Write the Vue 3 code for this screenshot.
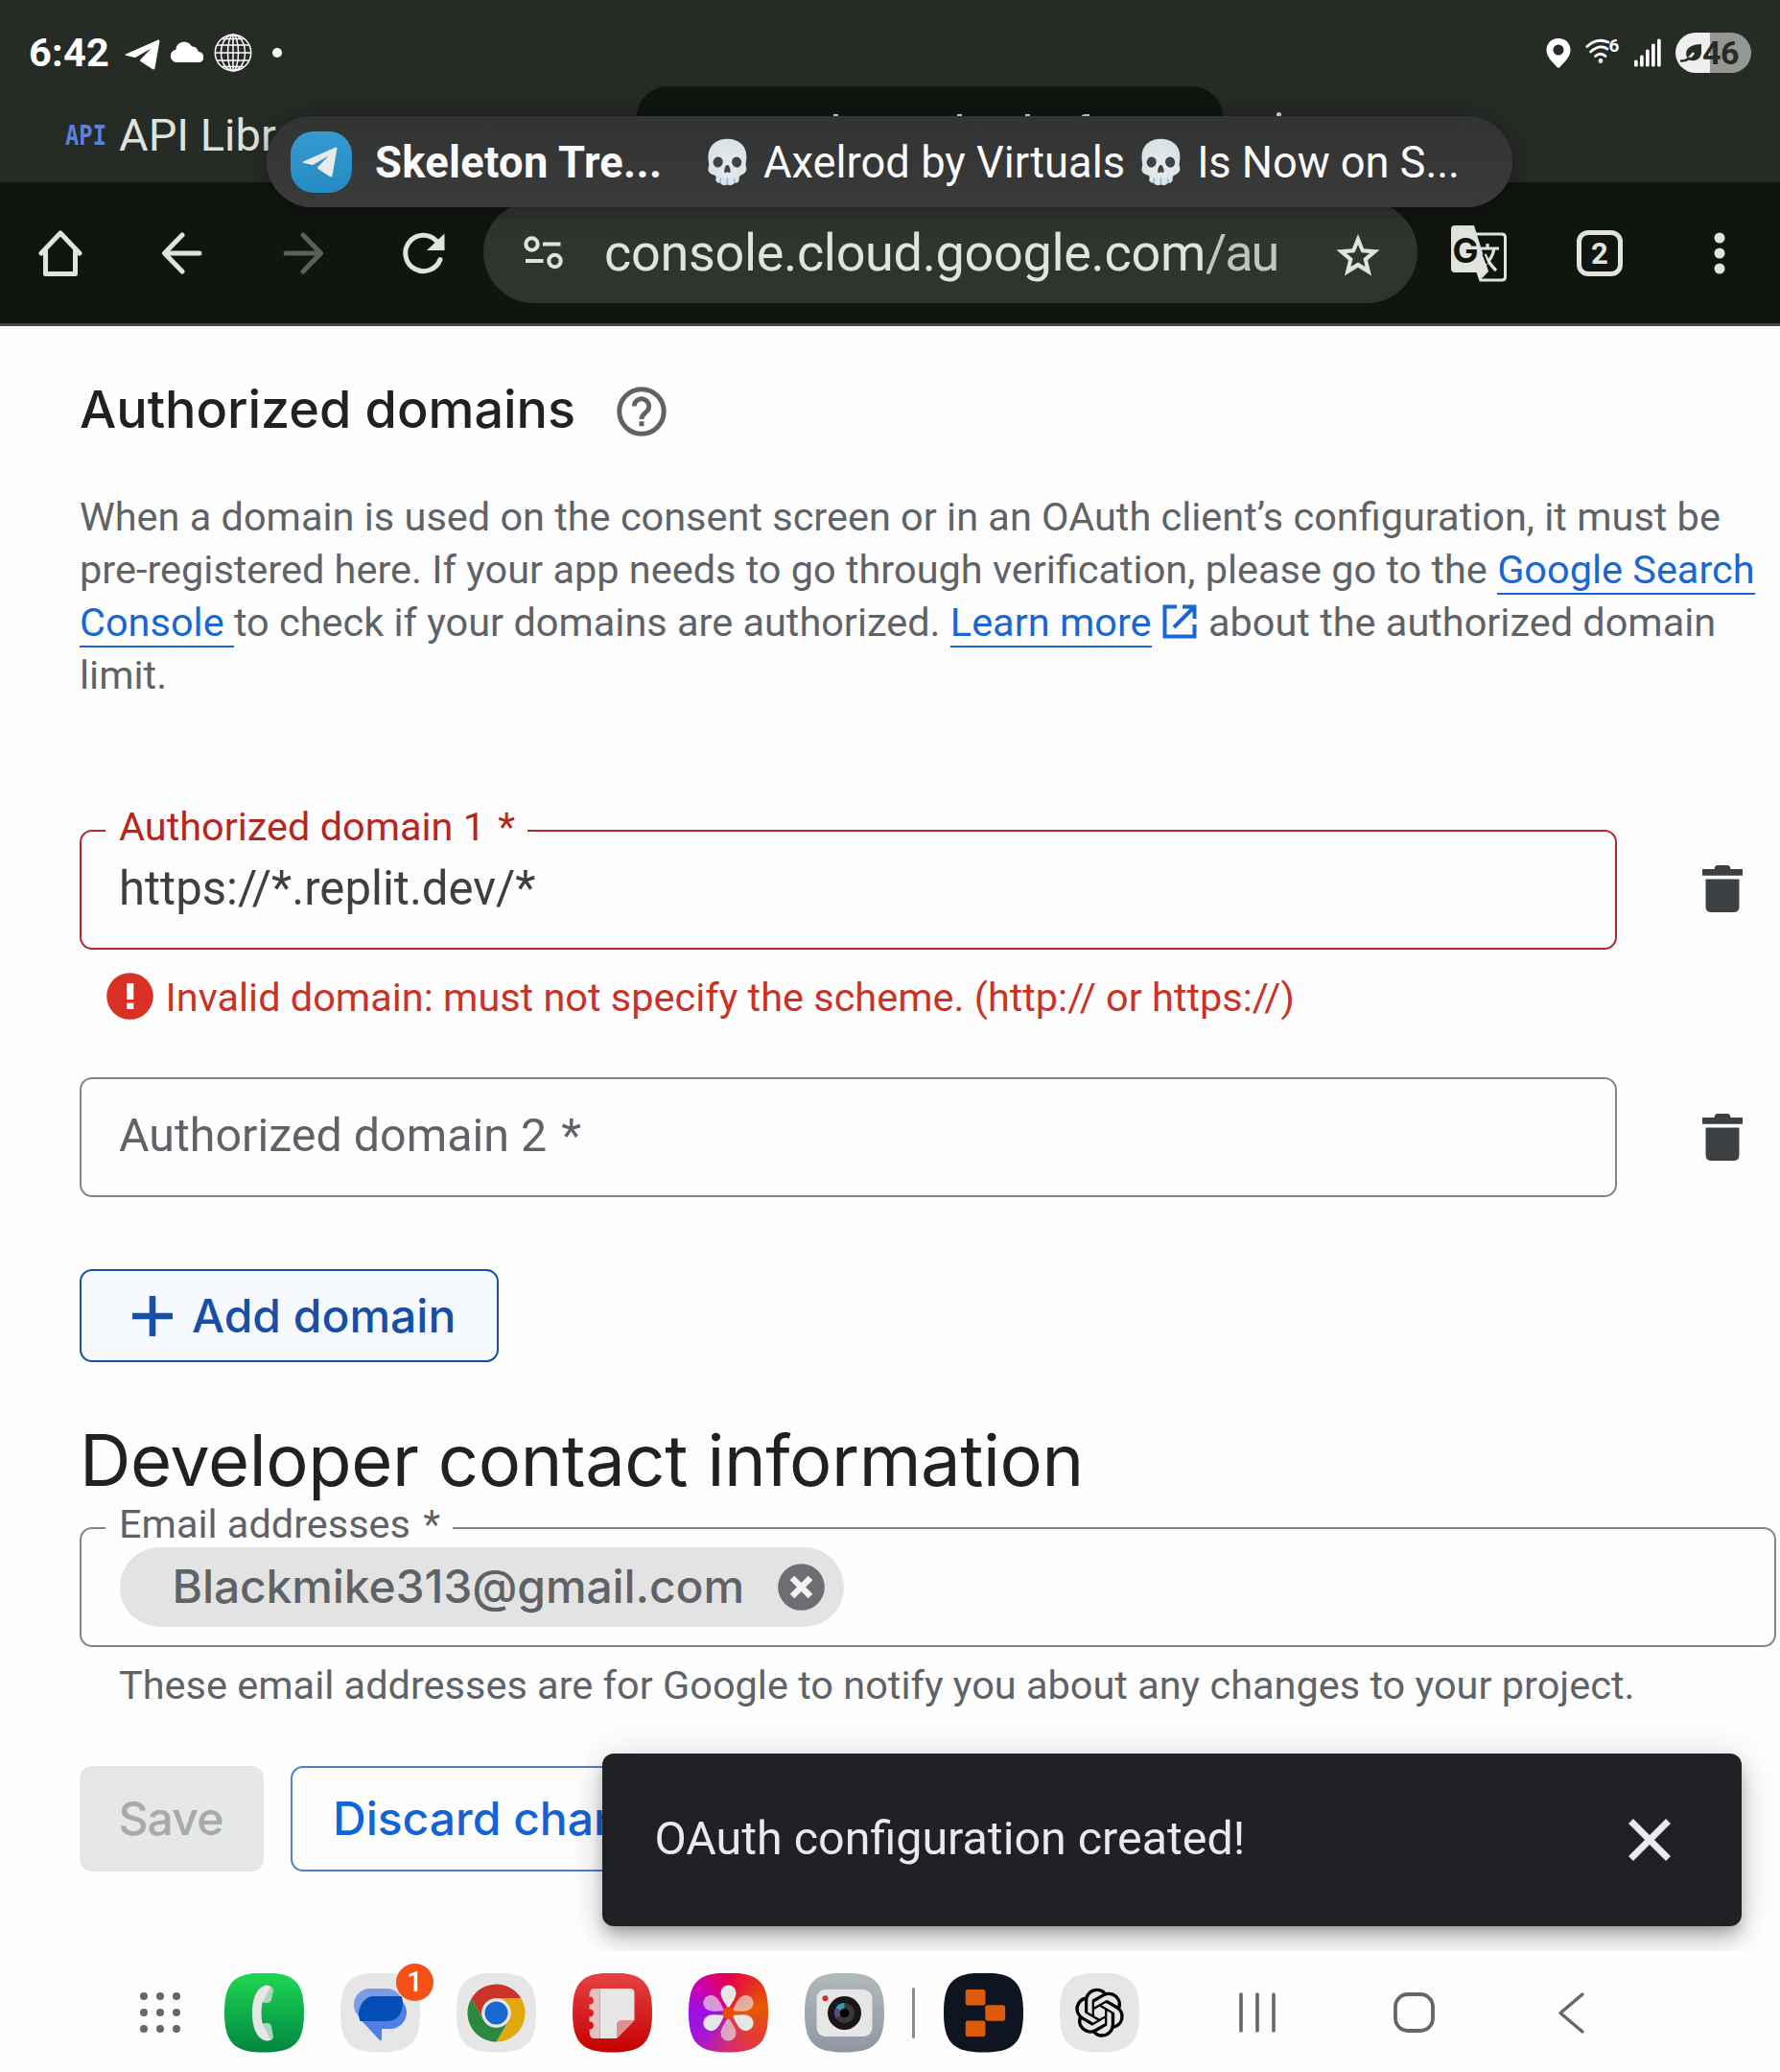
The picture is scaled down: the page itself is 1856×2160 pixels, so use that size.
<script setup>
const petals = [0, 60, 120, 180, 240, 300]
const signalBars = [7, 12, 18, 24, 29]
const gridDots = [0, 1, 2, 3, 4, 5, 6, 7, 8]
</script>

<template>
  <div class="screen">
    <header class="chrome">
      <div class="status">
        <span class="time">6:42</span>
        <svg class="s-plane" width="37" height="32" viewBox="0 0 37 32"><path d="M1 15.500 35 .5q1.600-.5 1.400 1.400L31.500 30q-.6 2.200-2.600.9L16.500 23q-1-.9 0-2L27.500 9.500 12 18.500q-1.200.6-2.400.3L1 16.800q-1.400-.6 0-1.300z" fill="#fff" /></svg>
        <svg class="s-cloud" width="37" height="21" viewBox="0 0 37 21"><path d="M7 21a6.700 6.700 0 0 1-.6-13.300A8.800 8.800 0 0 1 23 4.500a7 7 0 0 1 6.800 5.300A5.700 5.700 0 0 1 31 21z" fill="#fff" /></svg>
        <svg class="s-globe" width="40" height="40" viewBox="0 0 40 40" fill="none" stroke="#fff" stroke-width="1.500"><circle cx="20" cy="20" r="18.700" /><ellipse cx="20" cy="20" rx="12.500" ry="18.700" /><ellipse cx="20" cy="20" rx="5.500" ry="18.700" /><path d="M20 1v38M1 20h38M3.500 12h33M3.500 28h33M9 5.500h22M9 34.500h22" /></svg>
        <span class="s-dot"></span>
        <span class="grow"></span>
        <svg class="s-pin" width="26" height="31" viewBox="0 0 26 31"><path fill-rule="evenodd" d="M13 0C5.500 0 .5 5.500.5 12.200.5 20 8 25.500 11.500 30q1.500 1.500 3 0C18 25.500 25.500 20 25.500 12.200 25.500 5.500 20.500 0 13 0zm0 6.500a5.500 5.500 0 1 1 0 11 5.500 5.500 0 0 1 0-11z" fill="#fff" /></svg>
        <svg class="s-wifi" width="36" height="26" viewBox="0 0 36 26" fill="none" stroke="#fff" stroke-width="2.800" stroke-linecap="round"><path d="M1.800 8.500Q12 -1 24 4M5.500 14q9.500-8.500 17.500-3M10.500 18.500q5.500-4.500 10.500 0" /><circle cx="16" cy="23.500" r="1" /><text x="24.500" y="14" font-family="Roboto, sans-serif" font-weight="700" font-size="19" fill="#fff" stroke="none">6</text></svg>
        <svg class="s-signal" width="29" height="30" viewBox="0 0 29 30"><rect v-for="(h, i) in signalBars" :key="h" :x="i * 6" :y="29.500 - h" width="3.700" :height="h" rx="1.600" fill="#fff" /></svg>
        <div class="battery">
          <svg width="23" height="21" viewBox="0 0 23 21"><path d="M22 1v8c0 7-6 11-13 8.500C4 13 4 1 22 1z" fill="#272b26" /><path d="M1 18.500q8-1 13-8.500" fill="none" stroke="#eee" stroke-width="2.600" /><path d="M1 18.500q5 0 8.500-3" fill="none" stroke="#272b26" stroke-width="2.400" stroke-linecap="round" /></svg>
          <span>46</span>
        </div>
      </div>

      <div class="tabs">
        <svg class="api" width="44" height="26" viewBox="0 0 44 26"><text x="0" y="23" font-family="'DejaVu Sans Mono', monospace" font-weight="700" font-size="29" textLength="43" lengthAdjust="spacingAndGlyphs" fill="#5c82dc">API</text></svg>
        <span class="tab-title">API Libr</span>
        <div class="tab-active">
          <svg width="611" height="32" viewBox="0 0 611 32" fill="#d6d9d2"><path d="M205 29h5v3h-5zM334 29h5v3h-5zM405 29h5v3h-5zM463 32q1-3 5-3h4v3z" /></svg>
        </div>
        <span class="tab-dot"></span>
      </div>

      <div class="toolbar">
        <svg class="t-home" width="48" height="50" viewBox="0 0 48 50" fill="none" stroke="#e1e4dd" stroke-width="5" stroke-linejoin="round" stroke-linecap="round"><path d="M4 25 24 4 44 25M8.500 21v25.500h31V21" /></svg>
        <svg class="t-back" width="43" height="44" viewBox="0 0 43 44" fill="none" stroke="#e1e4dd" stroke-width="5" stroke-linejoin="round" stroke-linecap="round"><path d="M40 22H4M22 3 3.500 22 22 41" /></svg>
        <svg class="t-fwd" width="43" height="44" viewBox="0 0 43 44" fill="none" stroke="#5c605a" stroke-width="5" stroke-linejoin="round" stroke-linecap="round"><path d="M3 22h36M21 3l18.500 19L21 41" /></svg>
        <svg class="t-reload" width="44" height="44" viewBox="0 0 44 44"><path d="M39 28.500A18.700 18.700 0 1 1 35 9" fill="none" stroke="#e1e4dd" stroke-width="5" stroke-linecap="round" /><path d="M43.500 1.500V19H25z" fill="#e1e4dd" /></svg>
        <div class="omnibox">
          <svg class="o-tune" width="41" height="34" viewBox="0 0 41 34" fill="none" stroke="#e1e4dd" stroke-width="4"><circle cx="8.500" cy="8.500" r="6.200" /><path d="M20 8.500h18.500M2 26h18.500" /><circle cx="32.500" cy="26" r="6.200" /></svg>
          <span class="url">console.cloud.google.com<i>/au</i></span>
          <svg class="o-star" width="46" height="44" viewBox="0 0 46 44"><path fill-rule="evenodd" d="M23 0l6.100 15.200L45.500 16.600 33 27.300 37 43.500 23 34.800 9 43.500l4-16.200L.5 16.600l16.400-1.400zm0 11-3.400 8.200-8.700.7 6.700 5.700-2.100 8.500 7.500-4.600 7.500 4.600-2.100-8.500 6.700-5.700-8.700-.7z" fill="#e1e4dd" /></svg>
        </div>
        <svg class="t-trans" width="60" height="60" viewBox="0 0 60 60">
          <path d="M26 10h28q3.500 0 3.500 3.500v41q0 3.500-3.500 3.500H31" fill="none" stroke="#e1e4dd" stroke-width="3" />
          <path d="M5 1h20l15 48-9.500 10-3-9H5q-4 0-4-4V5q0-4 4-4z" fill="#e1e4dd" />
          <text x="2.500" y="40" font-family="Inter, sans-serif" font-weight="700" font-size="36" fill="#111510">G</text>
          <path d="M32 25h19M39 20v5M46 25q-2 11-10 17M36 31q4 9 12 17" fill="none" stroke="#e1e4dd" stroke-width="3.200" />
          <path d="M34.500 31l4 10" fill="none" stroke="#111510" stroke-width="2.200" />
        </svg>
        <div class="tabcount">2</div>
        <svg class="t-more" width="12" height="44" viewBox="0 0 12 44" fill="#e1e4dd"><circle cx="6" cy="6" r="5.500" /><circle cx="6" cy="22" r="5.500" /><circle cx="6" cy="38" r="5.500" /></svg>
      </div>

      <div class="notice">
        <div class="tg"><svg width="37" height="32" viewBox="0 0 37 32"><path d="M1 15.500 35 .5q1.600-.5 1.400 1.400L31.500 30q-.6 2.200-2.600.9L16.500 23q-1-.9 0-2L27.500 9.500 12 18.500q-1.200.6-2.400.3L1 16.800q-1.400-.6 0-1.300z" fill="#e8eaea" /></svg></div>
        <b>Skeleton Tre...</b>
        <span class="skull first">💀</span>
        <span class="msg">Axelrod by Virtuals</span>
        <span class="skull">💀</span>
        <span class="msg tail">Is Now on S...</span>
      </div>
    </header>

    <main class="page">
      <div class="title-row">
        <h2>Authorized domains</h2>
        <svg width="52" height="52" viewBox="0 0 52 52"><circle cx="26" cy="26" r="23.200" fill="none" stroke="#5f6368" stroke-width="5" /><path d="M18.300 20.500a7.700 7.700 0 1 1 13 5.600c-3 2.800-5.300 4-5.300 8" fill="none" stroke="#5f6368" stroke-width="4.800" /><rect x="23.500" y="36.300" width="5" height="5" fill="#5f6368" /></svg>
      </div>
      <p class="intro">When a domain is used on the consent screen or in an OAuth client’s configuration, it must be pre-registered here. If your app needs to go through verification, please go to the <a>Google Search Console </a>to check if your domains are authorized. <a>Learn more</a><svg class="ext" width="36" height="36" viewBox="0 0 36 36" fill="none" stroke="#1967d2" stroke-width="4"><path d="M15 2.500H2.500v31h31V21M21 2.500h12.500V15M33 3 12 24" /></svg>about the authorized domain limit.</p>

      <div class="field-row first-row">
        <div class="field invalid">
          <label>Authorized domain 1 <em>*</em></label>
          <span class="value">https://*.replit.dev/*</span>
        </div>
        <svg class="trash" width="42" height="49" viewBox="0 0 42 49" fill="#3c4043"><path d="M0 4h12.500Q13 0 16 0h10q3 0 3.500 4H42v6.800H0zM3.500 14.500h35V43q0 6-6 6h-23q-6 0-6-6z" /></svg>
      </div>
      <div class="error">
        <svg width="49" height="49" viewBox="0 0 49 49"><circle cx="24.500" cy="24.500" r="24.300" fill="#d93025" /><path d="M21.300 11h7v17h-7zM21.300 31.500h7v6.500h-7z" fill="#fff" /></svg>
        <span>Invalid domain: must not specify the scheme. (http:// or https://)</span>
      </div>
      <div class="field-row second-row">
        <div class="field"><span class="placeholder">Authorized domain 2 <em>*</em></span></div>
        <svg class="trash" width="42" height="49" viewBox="0 0 42 49" fill="#3c4043"><path d="M0 4h12.500Q13 0 16 0h10q3 0 3.500 4H42v6.800H0zM3.500 14.500h35V43q0 6-6 6h-23q-6 0-6-6z" /></svg>
      </div>

      <button class="add"><svg width="42" height="42" viewBox="0 0 42 42"><path d="M21 0v42M0 21h42" stroke="#174ea6" stroke-width="6.500" /></svg>Add domain</button>

      <h1>Developer contact information</h1>
      <div class="field email">
        <label>Email addresses <em>*</em></label>
        <div class="chip">
          <span>Blackmike313@gmail.com</span>
          <svg width="49" height="49" viewBox="0 0 49 49"><circle cx="24.500" cy="24.500" r="24.300" fill="#6c6e72" /><path d="M15 15l19 19M34 15 15 34" stroke="#f4f4f4" stroke-width="6.500" /></svg>
        </div>
      </div>
      <p class="helper">These email addresses are for Google to notify you about any changes to your project.</p>

      <div class="actions">
        <button class="save">Save</button>
        <button class="discard">Discard changes</button>
      </div>

      <div class="toast">
        <span>OAuth configuration created!</span>
        <svg width="44" height="44" viewBox="0 0 44 44"><path d="M2.500 2.500l39 39M41.500 2.500l-39 39" stroke="#e8eaed" stroke-width="7" /></svg>
      </div>
    </main>

    <nav class="dock">
      <div class="grid9"><i v-for="d in gridDots" :key="d"></i></div>
      <div class="app phone"><svg viewBox="0 0 83 83"><path d="M44 12.500C34 14 29 26 29 41.500S34 69 44 70.500q6 0 7-4l-2-11q-1-4-5-3.500l-4.500.5q-2-11 0-22l4.500.5q4 0 5-3.500l2-10q-1-4.500-7-5z" fill="#e6e6e6" /><path d="M48.500 13 39.500 31q9 1 9.500-4l2.300-11zM39.500 52 48.500 70l2.800-3-2.300-11q-1-5-9.500-4z" fill="#20b052" opacity=".3" /></svg></div>
      <div class="app-wrap">
        <div class="app light"><svg viewBox="0 0 83 83"><rect x="14" y="16" width="51" height="34" rx="17" fill="#7b9be3" /><path d="M36 24h16a17 17 0 0 1 0 34h-9v11q-.5 2-2 1L20.500 48Q16 38 24 30q5-6 12-6z" fill="#527fe6" /><path d="M34 24h29.500q1.500 3 1.500 9-2 17-17 17H20.500Q17 42 22 32q5-8 12-8z" fill="#044fb7" /></svg></div>
        <span class="badge">1</span>
      </div>
      <div class="app light"><svg viewBox="0 0 83 83"><circle cx="41.500" cy="41.500" r="17" fill="#e6e6e6" /><path d="M15.500 26.500A30 30 0 0 1 67.500 26.500H41.500A15 15 0 0 0 28.500 49z" fill="#cb3327" /><path d="M67.500 26.500A30 30 0 0 1 41.500 71.500L54.500 49A15 15 0 0 0 41.500 26.500z" fill="#e2a90c" /><path d="M41.500 71.500A30 30 0 0 1 15.500 26.500L28.500 49A15 15 0 0 0 54.500 49z" fill="#29893f" /><circle cx="41.500" cy="41.500" r="15.200" fill="#e6e6e6" /><circle cx="41.500" cy="41.500" r="12" fill="#1968d1" /></svg></div>
      <div class="app notes"><svg viewBox="0 0 83 83"><path d="M28.500 16H60q4.500 0 4.500 4.500V49L46 68H28.500z" fill="#e6e6e6" /><path d="M46 68V54q0-5 5-5h13.500z" fill="#e08f8f" /><path d="M28.500 16H22q-4.500 0-4.500 8.500c6-1 6 9 0 8v5c6-1 6 9 0 8v5c6-1 6 9 0 8Q17.500 68 22 68h6.500z" fill="#e6bfbf" /></svg></div>
      <div class="app gallery"><svg viewBox="0 0 83 83"><path v-for="a in petals" :key="a" d="M41.500 37C38 31 33.500 26 33.500 20.500a8 8 0 0 1 16 0C49.500 26 45 31 41.500 37z" fill="#e6e6e6" :opacity="a % 120 === 0 ? 1 : 0.650" :transform="`rotate(${a} 41.5 41.5)`" /><circle cx="41.500" cy="41.500" r="6.200" fill="#e64d00" /></svg></div>
      <div class="app camera"><svg viewBox="0 0 83 83"><rect x="12.500" y="17" width="58" height="49" rx="9" fill="#e6e6e6" /><circle cx="21.500" cy="26.300" r="3" fill="#d12f2f" /><circle cx="41.500" cy="41.500" r="17.500" fill="#191617" /><circle cx="41.500" cy="41.500" r="10.500" fill="#3a3838" /><path d="M41.500 41.500V31A10.500 10.500 0 0 0 32.500 36z" fill="#2b9fb5" /><path d="M41.500 41.500 32.500 36A10.500 10.500 0 0 0 32.500 47z" fill="#5a4a80" /><circle cx="41.500" cy="41.500" r="4.800" fill="#000" /></svg></div>
      <span class="divider"></span>
      <div class="app replit"><svg viewBox="0 0 83 83" fill="#dc5b0b"><rect x="22.700" y="17" width="20.800" height="16.500" rx="2.500" /><rect x="43.300" y="33.300" width="20.800" height="16.500" rx="2.500" /><rect x="22.700" y="49.600" width="20.800" height="16.500" rx="2.500" /></svg></div>
      <div class="app light"><svg viewBox="0 0 83 83"><g transform="translate(16 15.700) scale(2.125)"><path d="M22.2819 9.8211a5.9847 5.9847 0 0 0-.5157-4.9108 6.0462 6.0462 0 0 0-6.5098-2.9A6.0651 6.0651 0 0 0 4.9807 4.1818a5.9847 5.9847 0 0 0-3.9977 2.9 6.0462 6.0462 0 0 0 .7427 7.0966 5.98 5.98 0 0 0 .511 4.9107 6.051 6.051 0 0 0 6.5146 2.9001A5.9847 5.9847 0 0 0 13.2599 24a6.0557 6.0557 0 0 0 5.7718-4.2058 5.9894 5.9894 0 0 0 3.9977-2.9001 6.0557 6.0557 0 0 0-.7475-7.0729zm-9.022 12.6081a4.4755 4.4755 0 0 1-2.8764-1.0408l.1419-.0804 4.7783-2.7582a.7948.7948 0 0 0 .3927-.6813v-6.7369l2.02 1.1686a.071.071 0 0 1 .038.052v5.5826a4.504 4.504 0 0 1-4.4945 4.4944zm-9.6607-4.1254a4.4708 4.4708 0 0 1-.5346-3.0137l.142.0852 4.783 2.7582a.7712.7712 0 0 0 .7806 0l5.8428-3.3685v2.3324a.0804.0804 0 0 1-.0332.0615L9.74 19.9502a4.4992 4.4992 0 0 1-6.1408-1.6464zM2.3408 7.8956a4.485 4.485 0 0 1 2.3655-1.9728V11.6a.7664.7664 0 0 0 .3879.6765l5.8144 3.3543-2.0201 1.1685a.0757.0757 0 0 1-.071 0l-4.8303-2.7865A4.504 4.504 0 0 1 2.3408 7.872zm16.5963 3.8558L13.1038 8.364 15.1192 7.2a.0757.0757 0 0 1 .071 0l4.8303 2.7913a4.4944 4.4944 0 0 1-.6765 8.1042v-5.6772a.79.79 0 0 0-.407-.667zm2.0107-3.0231l-.142-.0852-4.7735-2.7818a.7759.7759 0 0 0-.7854 0L9.409 9.2297V6.8974a.0662.0662 0 0 1 .0284-.0615l4.8303-2.7866a4.4992 4.4992 0 0 1 6.6802 4.66zM8.3065 12.863l-2.02-1.1638a.0804.0804 0 0 1-.038-.0567V6.0742a4.4992 4.4992 0 0 1 7.3757-3.4537l-.142.0805L8.704 5.459a.7948.7948 0 0 0-.3927.6813zm1.0976-2.3654l2.602-1.4998 2.6069 1.4998v2.9994l-2.5974 1.4997-2.6067-1.4997Z" fill="#000" /></g></svg></div>
      <svg class="n-recents" width="38" height="42" viewBox="0 0 38 42" stroke="#666" stroke-width="3.600" stroke-linecap="round"><path d="M2 2v38M19 2v38M36 2v38" /></svg>
      <svg class="n-home" width="43" height="42" viewBox="0 0 43 42"><rect x="2" y="2" width="39" height="38" rx="13" fill="none" stroke="#666" stroke-width="3.800" /></svg>
      <svg class="n-back" width="27" height="43" viewBox="0 0 27 43"><path d="M25 2 2 21.500 25 41" fill="none" stroke="#666" stroke-width="3.400" stroke-linecap="round" stroke-linejoin="round" /></svg>
    </nav>
  </div>
</template>

<style>
body { margin: 0; background: #fefefe; }
</style>

<style scoped>
* { box-sizing: border-box; }
svg { display: block; flex: none; overflow: visible; }
em { font-style: normal; }
.screen { width: 1856px; height: 2160px; overflow: hidden; background: #fefefe; font-family: Roboto, sans-serif; display: flex; flex-direction: column; }
.grow { flex: 1; }

.chrome { position: relative; height: 340px; flex: none; background: #111510; border-bottom: 3px solid #444842; }
.status { height: 90px; padding: 20px 30px 0 30px; display: flex; align-items: center; background: #272b26; white-space: nowrap; }
.time { font-size: 41.500px; font-weight: 700; color: #fff; width: 84px; line-height: 70px; letter-spacing: .2px; }
.s-plane { margin: 3px 0 0 16px; }
.s-cloud { margin: 0 0 2px 10px; }
.s-globe { margin-left: 9px; }
.s-dot { width: 10px; height: 10px; border-radius: 50%; background: #fff; margin-left: 21px; }
.s-wifi { margin: 0 0 4px 15px; }
.s-signal { margin: 0 0 0 15px; }
.battery { width: 79px; height: 42px; margin-left: 14px; border-radius: 21px; display: flex; align-items: center; padding-left: 5px; background: linear-gradient(90deg, #eee 36px, #959793 36px); color: #272b26; font-size: 34px; font-weight: 700; letter-spacing: -.6px; }

.tabs { height: 100px; background: #272b26; display: flex; align-items: flex-start; white-space: nowrap; }
.api { margin: 38px 0 0 68px; }
.tab-title { width: 190px; margin: 21px 0 0 12px; overflow: hidden; font-size: 47px; line-height: 60px; color: #dfe2db; }
.tab-active { width: 611px; height: 100px; margin-left: 350px; border-radius: 32px 32px 0 0; background: #111510; }
.tab-dot { width: 5px; height: 5px; border-radius: 50%; margin: 27px 0 0 56px; background: #dfe2db; }

.toolbar { height: 147px; display: flex; align-items: center; padding: 0 0 0 39px; }
.t-back { margin-left: 81px; }
.t-fwd { margin-left: 84px; }
.t-reload { margin-left: 82px; }
.omnibox { width: 974px; height: 106px; margin: 0 0 1px 40px; border-radius: 53px; background: #30342f; display: flex; align-items: center; padding-left: 42px; }
.url { width: 745px; margin-left: 43px; font-size: 54px; line-height: 106px; padding-top: 1px; letter-spacing: -.33px; color: #e1e4dd; white-space: nowrap; }
.url i { font-style: normal; color: #c0c6b9; letter-spacing: -2px; }
.o-star { margin-left: 17.500px; margin-bottom: -5px; }
.t-trans { margin-left: 34px; }
.tabcount { width: 48px; height: 48px; margin-left: 72px; border: 5px solid #e1e4dd; border-radius: 12px; color: #e1e4dd; font-size: 31px; font-weight: 700; line-height: 39px; text-align: center; }
.t-more { margin-left: 95px; }

.notice { position: absolute; left: 278px; top: 121px; width: 1299px; height: 95px; border-radius: 48px; background: linear-gradient(#323433, #393a39); box-shadow: 0 2px 26px rgba(0, 0, 0, .35); display: flex; align-items: center; padding: 2px 0 0 25px; color: #fafafa; font-size: 45.300px; line-height: 95px; white-space: nowrap; }
.tg { width: 64px; height: 64px; margin-top: -2px; border-radius: 24px; background: linear-gradient(#349bd2, #268bc1); display: flex; align-items: center; justify-content: center; padding-right: 3px; }
.notice b { width: 302px; margin-left: 24px; letter-spacing: .3px; }
.skull { width: 47px; display: flex; justify-content: center; font-size: 44px; margin-left: 14px; }
.skull.first { margin-left: 42px; }
.msg { margin-left: 14px; }
.msg.tail { margin-left: 14px; letter-spacing: -.1px; }

.page { position: relative; height: 1694px; flex: none; overflow: hidden; padding: 57px 0 0 83px; color: #5f6368; display: flex; flex-direction: column; align-items: flex-start; }
.page > * { flex: none; }
.title-row { display: flex; height: 60px; }
h2 { margin: 0; width: 560px; font: 500 54px/60px Inter, sans-serif; letter-spacing: -.06px; color: #202124; white-space: nowrap; }
.title-row svg { margin-top: 6px; }
.intro { width: 1752px; margin: 54.500px 0 0; font-size: 41.460px; line-height: 55.300px; }
.intro a { color: #1967d2; border-bottom: 2.500px solid #1967d2; }
.ext { display: inline-block; vertical-align: -3px; margin: 0 12.500px 0 11px; }

.field-row { display: flex; align-items: center; gap: 89px; height: 125px; }
.first-row { margin-top: 132px; }
.second-row { margin-top: 60px; }
.field { position: relative; width: 1603px; height: 125px; border: 2.500px solid #80868b; border-radius: 13px; font-size: 48.400px; padding-left: 39px; white-space: nowrap; }
.field label { position: absolute; left: 25px; top: -29px; padding: 0 12.500px 0 14px; background: #fefefe; font-size: 41.450px; line-height: 48px; color: #5f6368; }
.field em { margin-left: 3px; }
.field.invalid { border-color: #b3282b; }
.field.invalid label { color: #b8251f; }
.value { font-size: 49.100px; line-height: 119px; color: #3c4043; }
.placeholder { line-height: 118px; }
.trash { margin-top: -2px; }
.second-row .trash { margin-top: 0; }
.error { display: flex; height: 49px; margin: 24px 0 0 27.500px; color: #cb3226; font-size: 41.460px; line-height: 52px; gap: 13px; }

button { font-family: Inter, sans-serif; font-weight: 500; font-size: 48px; border-radius: 13px; white-space: nowrap; padding: 0; }
.add { width: 437px; height: 97px; margin-top: 75.500px; border: 2.500px solid #1a4fa3; background: #f6faff; color: #174ea6; display: flex; align-items: center; padding-left: 53px; gap: 20px; }
h1 { margin: 57px 0 0; font: 400 74px/90px Inter, sans-serif; letter-spacing: -.4px; color: #202124; white-space: nowrap; }
.email { width: 1769px; margin-top: 25px; display: flex; align-items: center; }
.email .chip { margin-left: .5px; }
.chip { display: flex; align-items: center; width: 755px; height: 83px; border-radius: 42px; background: #e3e3e3; padding-left: 55px; color: #5f6368; font: 500 48px/81px Inter, sans-serif; letter-spacing: -.12px; }
.chip span { width: 631px; padding-bottom: 2px; }
.helper { margin: 12px 0 0 41px; font-size: 41.470px; line-height: 56px; white-space: nowrap; }
.actions { display: flex; gap: 28px; margin-top: 56px; }
.save { width: 192px; height: 110px; border: 0; background: #e6e8e7; color: #a8aaaa; letter-spacing: -.8px; padding: 0 2px 2px 0; }
.discard { width: 470px; height: 110px; border: 2.500px solid #4f7fcb; background: #fefefe; color: #1263d6; padding: 0 0 2px 42px; text-align: left; }

.toast { position: absolute; left: 628px; top: 1488px; width: 1188px; height: 180px; border-radius: 12px; background: #202124; color: #e8eaed; display: flex; align-items: center; justify-content: space-between; padding: 0 74px 0 54.500px; font-size: 48.400px; line-height: 56px; box-shadow: 0 8px 13px -3px rgba(0, 0, 0, .22), 0 15px 25px rgba(0, 0, 0, .16), 0 3px 45px rgba(0, 0, 0, .14); }
.toast span { margin-top: -3px; }

.dock { height: 126px; flex: none; display: flex; align-items: center; padding: 2px 0 0 146px; background: #fefefe; }
.grid9 { width: 43px; display: grid; grid-template-columns: repeat(3, 8px); gap: 9px; margin-right: 45px; }
.grid9 i { width: 8px; height: 8px; border-radius: 50%; background: #666; }
.app { width: 83px; height: 83px; flex: none; margin-right: 38px; clip-path: path("M0 41.500C0 10 10 0 41.500 0S83 10 83 41.500 73 83 41.500 83 0 73 0 41.500Z"); }
.app-wrap { position: relative; }
.badge { position: absolute; left: 58px; top: -10px; width: 39px; height: 39px; border-radius: 50%; background: #f55016; color: #fff; font-size: 29px; font-weight: 500; line-height: 39px; text-align: center; }
.light { background: #e6e6e6; }
.phone { background: linear-gradient(#1ed850, #018543); }
.notes { background: linear-gradient(#e64242, #c40000); }
.gallery { background: conic-gradient(from 0deg, #e6004a, #e65a00 80deg, #e63c30 130deg, #d62c6c 180deg, #a818d0 225deg, #9a10e6 270deg, #cc00aa 315deg, #e6004a); }
.camera { background: linear-gradient(#b0babb, #9096a1); }
.replit { background: #0e1420; }
.divider { width: 3px; height: 53px; background: #8c8c8c; border-radius: 2px; margin: 0 30px 0 -9px; }
.n-recents { margin-left: 66px; }
.n-home { margin-left: 123px; }
.n-back { margin-left: 129px; }
</style>
